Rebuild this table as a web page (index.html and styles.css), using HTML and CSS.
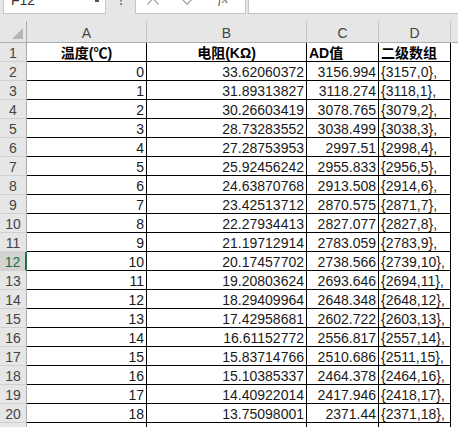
FILE: index.html
```html
<!DOCTYPE html>
<html>
<head>
<meta charset="utf-8">
<link rel="stylesheet" href="styles.css">
</head>
<body>
<div class="formula-bar">
  <div class="name-box"><span class="name-text">F12</span><span class="nb-arrow"></span></div>
  <div class="dots"><svg width="4" height="6" viewBox="0 0 4 6"><rect x="1" y="0" width="2" height="1.5" fill="#8a8a8a"/><rect x="1" y="3" width="2" height="2" fill="#8a8a8a"/></svg></div>
  <div class="fx-buttons">
    <svg class="ico-x" width="14" height="13" viewBox="0 0 14 13"><path d="M1.5 -7.5 L12.5 4.5 M12.5 -7.5 L1.5 4.5" stroke="#a8a8a8" stroke-width="1.3" fill="none"/></svg>
    <svg class="ico-check" width="16" height="13" viewBox="0 0 16 13"><path d="M1 -1 L6 4.3 L14 -4" stroke="#a8a8a8" stroke-width="1.4" fill="none"/></svg>
    <span class="fx">fx</span>
  </div>
  <div class="formula-input"></div>
</div>
<div class="gap"></div>
<div class="sheet">
  <div class="corner"><span class="tri"></span></div>
  <div class="ch">A</div><div class="ch">B</div><div class="ch">C</div><div class="ch">D</div><div class="ch ch-e"></div>

  <div class="rh">1</div><div class="c hd ctr">温度(℃)</div><div class="c hd ctr">电阻(KΩ)</div><div class="c hd">AD值</div><div class="c hd">二级数组</div><div class="e"></div>
  <div class="rh">2</div><div class="c n">0</div><div class="c n">33.62060372</div><div class="c n">3156.994</div><div class="c">{3157,0},</div><div class="e"></div>
  <div class="rh">3</div><div class="c n">1</div><div class="c n">31.89313827</div><div class="c n">3118.274</div><div class="c">{3118,1},</div><div class="e"></div>
  <div class="rh">4</div><div class="c n">2</div><div class="c n">30.26603419</div><div class="c n">3078.765</div><div class="c">{3079,2},</div><div class="e"></div>
  <div class="rh">5</div><div class="c n">3</div><div class="c n">28.73283552</div><div class="c n">3038.499</div><div class="c">{3038,3},</div><div class="e"></div>
  <div class="rh">6</div><div class="c n">4</div><div class="c n">27.28753953</div><div class="c n">2997.51</div><div class="c">{2998,4},</div><div class="e"></div>
  <div class="rh">7</div><div class="c n">5</div><div class="c n">25.92456242</div><div class="c n">2955.833</div><div class="c">{2956,5},</div><div class="e"></div>
  <div class="rh">8</div><div class="c n">6</div><div class="c n">24.63870768</div><div class="c n">2913.508</div><div class="c">{2914,6},</div><div class="e"></div>
  <div class="rh">9</div><div class="c n">7</div><div class="c n">23.42513712</div><div class="c n">2870.575</div><div class="c">{2871,7},</div><div class="e"></div>
  <div class="rh">10</div><div class="c n">8</div><div class="c n">22.27934413</div><div class="c n">2827.077</div><div class="c">{2827,8},</div><div class="e"></div>
  <div class="rh">11</div><div class="c n">9</div><div class="c n">21.19712914</div><div class="c n">2783.059</div><div class="c">{2783,9},</div><div class="e"></div>
  <div class="rh sel">12</div><div class="c n">10</div><div class="c n">20.17457702</div><div class="c n">2738.566</div><div class="c">{2739,10},</div><div class="e"></div>
  <div class="rh">13</div><div class="c n">11</div><div class="c n">19.20803624</div><div class="c n">2693.646</div><div class="c">{2694,11},</div><div class="e"></div>
  <div class="rh">14</div><div class="c n">12</div><div class="c n">18.29409964</div><div class="c n">2648.348</div><div class="c">{2648,12},</div><div class="e"></div>
  <div class="rh">15</div><div class="c n">13</div><div class="c n">17.42958681</div><div class="c n">2602.722</div><div class="c">{2603,13},</div><div class="e"></div>
  <div class="rh">16</div><div class="c n">14</div><div class="c n">16.61152772</div><div class="c n">2556.817</div><div class="c">{2557,14},</div><div class="e"></div>
  <div class="rh">17</div><div class="c n">15</div><div class="c n">15.83714766</div><div class="c n">2510.686</div><div class="c">{2511,15},</div><div class="e"></div>
  <div class="rh">18</div><div class="c n">16</div><div class="c n">15.10385337</div><div class="c n">2464.378</div><div class="c">{2464,16},</div><div class="e"></div>
  <div class="rh">19</div><div class="c n">17</div><div class="c n">14.40922014</div><div class="c n">2417.946</div><div class="c">{2418,17},</div><div class="e"></div>
  <div class="rh">20</div><div class="c n">18</div><div class="c n">13.75098001</div><div class="c n">2371.44</div><div class="c">{2371,18},</div><div class="e"></div>
  <div class="rh">21</div><div class="c n"></div><div class="c n"></div><div class="c n"></div><div class="c"></div><div class="e"></div>
</div>
</body>
</html>
```
FILE: styles.css
```css
html, body {
  margin: 0;
  padding: 0;
  background: #ffffff;
  overflow: hidden;
  width: 458px;
  height: 427px;
}
body {
  font-family: "Liberation Sans", "Noto Sans CJK SC", sans-serif;
  font-size: 14px;
  color: #1a1a1a;
}
.formula-bar {
  display: flex;
  height: 14px;
  background: #e6e6e6;
}
.name-box {
  margin-left: 3px;
  width: 103px;
  height: 14px;
  box-sizing: border-box;
  background: #fff;
  border: 1px solid #c6c6c6;
  border-top: none;
  overflow: hidden;
  display: flex;
  justify-content: space-between;
  padding: 0 6px 0 7px;
}
.name-text {
  display: block;
  line-height: 14px;
  margin-top: -7px;
  color: #333;
}
.nb-arrow {
  display: block;
  width: 4px;
  height: 2px;
  background: #555;
  margin-top: 0;
}
.dots {
  width: 29px;
  display: flex;
  justify-content: center;
}
.fx-buttons {
  width: 111px;
  height: 14px;
  box-sizing: border-box;
  background: #fff;
  border: 1px solid #c6c6c6;
  border-top: none;
  display: flex;
  align-items: flex-start;
  overflow: hidden;
}
.ico-x { margin-left: 10px; }
.ico-check { margin-left: 21px; }
.fx {
  margin-left: 21px;
  font-family: "Liberation Serif", serif;
  font-style: italic;
  font-size: 14px;
  line-height: 14px;
  margin-top: -8px;
  color: #666;
}
.formula-input {
  flex: 1;
  margin-left: 2px;
  height: 14px;
  box-sizing: border-box;
  background: #fff;
  border-left: 1px solid #c6c6c6;
  border-bottom: 1px solid #c6c6c6;
}
.gap {
  height: 7px;
  background: #e6e6e6;
}
.sheet {
  display: grid;
  grid-template-columns: 27px 120px 160px 72px 72px 7px;
  grid-template-rows: 22px;
  grid-auto-rows: 19px;
}
.sheet > div {
  box-sizing: border-box;
  white-space: nowrap;
  overflow: visible;
}
.corner {
  background: #e6e6e6;
  border-right: 1px solid #ababab;
  border-bottom: 1px solid #ababab;
  display: flex;
  justify-content: flex-end;
  align-items: flex-end;
  padding: 0 3px 3px 0;
}
.tri {
  width: 0;
  height: 0;
  border-left: 11px solid transparent;
  border-bottom: 11px solid #b4b4b4;
}
.ch {
  background: #e6e6e6;
  border-right: 1px solid #c6c6c6;
  border-bottom: 1px solid #ababab;
  text-align: center;
  color: #444;
  line-height: 18px;
  padding-top: 3px;
}
.ch-e { border-right: none; }
.rh {
  background: #e6e6e6;
  border-right: 1px solid #ababab;
  border-bottom: 1px solid #d0d0d0;
  text-align: center;
  color: #444;
  line-height: 18px;
  padding-top: 1px;
}
.rh.sel {
  background: #d2d2d2;
  color: #217346;
  border-right: 2px solid #217346;
}
.c {
  border-right: 1px solid #000;
  border-bottom: 1px solid #000;
  line-height: 18px;
  padding: 1px 2px 0 2px;
}
.c.n { text-align: right; }
.c.hd { font-weight: bold; color: #000; }
.c.ctr { text-align: center; }
.e { background: #fff; }
```
